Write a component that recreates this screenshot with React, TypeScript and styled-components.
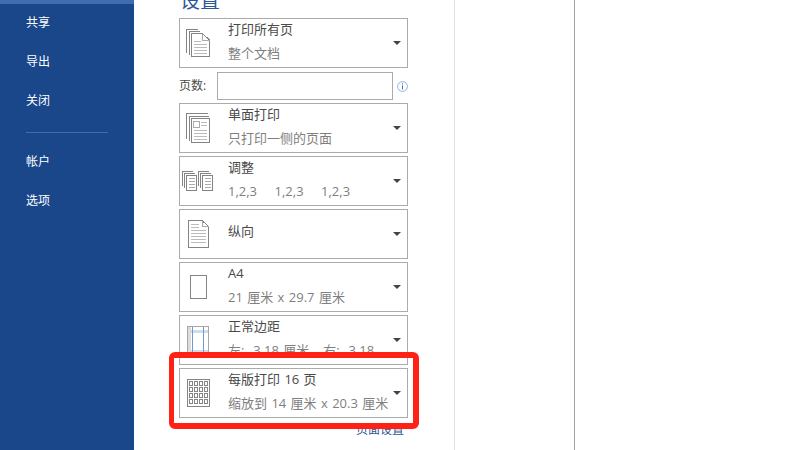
import React from 'react';
import styled, { createGlobalStyle } from 'styled-components';

const GlobalStyle = createGlobalStyle`
  html, body {
    margin: 0;
    width: 800px;
    height: 450px;
    overflow: hidden;
    background: #fff;
    font-family: 'Open Sans', 'Noto Sans CJK SC', sans-serif;
  }
`;

const line = '#848484';

const StackedPagesIcon = () => (
  <svg width="24" height="28" viewBox="0 0 24 28" fill="none" stroke={line} strokeWidth="1" shapeRendering="crispEdges">
    <path d="M.5 24V.5H12M3.500 26V2.500H14" />
    <path d="M5.500 27.500V4.500H16.500L23.500 11V27.500Z" fill="#fff" />
    <path d="M16.500 4.500V11H23.500" stroke="#aaa" />
    <path d="M8 12.500H15M8 15.500H21M8 18.500H21M8 21.500H21M8 24.500H21" stroke="#bbb" />
  </svg>
);

const OneSidedIcon = () => (
  <svg width="24" height="30" viewBox="0 0 24 30" fill="none" stroke={line} strokeWidth="1" shapeRendering="crispEdges">
    <path d="M.5 26V.5H22M3.500 28V3.500H23" />
    <path d="M5.500 29.500V5.500H23.500V29.500Z" fill="#fff" />
    <path d="M7.500 8.500H13.500V14.500H7.500Z" stroke="#aaa" />
    <path d="M15 9.500H21M15 12.500H21M8 17.500H21M8 20.500H21M8 23.500H21M8 26.500H21" stroke="#bbb" />
  </svg>
);

const CollatedSet = () => (
  <g>
    <path d="M.5 15V.5H11M2.500 17V2.500H13" />
    <path d="M4.500 19.500V4.500H14.500V19.500Z" fill="#fff" />
    <path d="M6.500 7.500H12.500M6.500 10.500H12.500M6.500 13.500H12.500M6.500 16.500H12.500" stroke="#aaa" />
  </g>
);

const CollatedIcon = () => (
  <svg width="32" height="21" viewBox="0 0 32 21" fill="none" stroke={line} strokeWidth="1" shapeRendering="crispEdges">
    <CollatedSet />
    <g transform="translate(16 0)">
      <CollatedSet />
    </g>
  </svg>
);

const PortraitIcon = () => (
  <svg width="21" height="28" viewBox="0 0 21 28" fill="none" stroke={line} strokeWidth="1" shapeRendering="crispEdges">
    <path d="M.5 27.500V.5H14L20.500 6.500V27.500Z" />
    <path d="M14 .5V6.500H20.500" stroke="#aaa" />
    <path d="M3 4.500H11M3 7.500H11M3 10.500H18M3 13.500H18M3 16.500H18M3 19.500H18M3 22.500H18" stroke="#bbb" />
  </svg>
);

const PaperIcon = () => (
  <svg width="17" height="24" viewBox="0 0 17 24" fill="none" stroke={line} strokeWidth="1" shapeRendering="crispEdges">
    <path d="M.5 .5H16.500V23.500H.5Z" />
  </svg>
);

const MarginsIcon = () => (
  <svg width="22" height="29" viewBox="0 0 22 29" fill="none" shapeRendering="crispEdges">
    <path d="M.5 .5H21.500V28.500H.5Z" stroke="#a8a8a8" />
    <path d="M1 5H21M1 25H21" stroke="#cfdcec" strokeWidth="3" />
    <path d="M5.500 1V28M16.500 1V28" stroke="#6f9bcc" />
    <path d="M2 1V28" stroke="#dcdcdc" strokeWidth="3" />
  </svg>
);

const PagesPerSheetIcon = () => (
  <svg width="23" height="28" viewBox="0 0 23 28" fill="none" stroke={line} strokeWidth="1" shapeRendering="crispEdges">
    <path d="M.5 .5H22.500V27.500H.5Z" />
    {[2, 8, 14, 20].map((y) =>
      [2, 7, 12, 17].map((x) => <rect key={`${x}-${y}`} x={x + 0.5} y={y + 0.5} width="3" height="4" />),
    )}
  </svg>
);

const InfoIcon = () => (
  <svg width="11" height="11" viewBox="0 0 11 11" fill="none">
    <circle cx="5.500" cy="5.500" r="4.900" stroke="#8fb2e0" />
    <path d="M5.500 2.300V3.500M5.500 4.500V8.500" stroke="#3f72b8" />
  </svg>
);

const CollationDetail = () => (
  <Columns $gap={17.5}>
    <span>1,2,3</span>
    <span>1,2,3</span>
    <span>1,2,3</span>
  </Columns>
);

const MarginsDetail = () => (
  <Columns $gap={14}>
    <span>左:  3.18 厘米</span>
    <span>右:  3.18</span>
  </Columns>
);

type Option = {
  title: string;
  detail?: React.ReactNode;
  icon: React.ReactNode;
};

const beforePages: Option[] = [
  { title: '打印所有页', detail: '整个文档', icon: <StackedPagesIcon /> },
];

const afterPages: Option[] = [
  { title: '单面打印', detail: '只打印一侧的页面', icon: <OneSidedIcon /> },
  { title: '调整', detail: <CollationDetail />, icon: <CollatedIcon /> },
  { title: '纵向', icon: <PortraitIcon /> },
  { title: 'A4', detail: '21 厘米 x 29.7 厘米', icon: <PaperIcon /> },
  { title: '正常边距', detail: <MarginsDetail />, icon: <MarginsIcon /> },
  { title: '每版打印 16 页', detail: '缩放到 14 厘米 x 20.3 厘米', icon: <PagesPerSheetIcon /> },
];

const OptionRow = ({ option }: { option: Option }) => (
  <Dropdown>
    <IconSlot>{option.icon}</IconSlot>
    <Labels>
      <Title>{option.title}</Title>
      {option.detail && <Detail>{option.detail}</Detail>}
    </Labels>
    <Caret />
  </Dropdown>
);

export default function App() {
  return (
    <>
      <GlobalStyle />
      <Page>
        <Sidebar>
          <TopTab />
          <NavList>
            <NavItem>共享</NavItem>
            <NavItem>导出</NavItem>
            <NavItem>关闭</NavItem>
            <NavDivider />
            <NavItem>帐户</NavItem>
            <NavItem>选项</NavItem>
          </NavList>
        </Sidebar>
        <Settings>
          <Heading>设置</Heading>
          {beforePages.map((option) => (
            <OptionRow key={option.title} option={option} />
          ))}
          <PagesRow>
            <PagesLabel>页数:</PagesLabel>
            <PagesInput />
            <InfoIcon />
          </PagesRow>
          <OptionStack>
            {afterPages.map((option) => (
              <OptionRow key={option.title} option={option} />
            ))}
          </OptionStack>
          <SetupLink>页面设置</SetupLink>
          <Highlight />
        </Settings>
        <Copies />
        <Preview />
      </Page>
    </>
  );
}

const Page = styled.div`
  display: flex;
  width: 800px;
  height: 450px;
  overflow: hidden;
  background: #fff;
`;

const Sidebar = styled.nav`
  flex: 0 0 134px;
  background: #19478a;
  display: flex;
  flex-direction: column;
`;

const TopTab = styled.div`
  height: 4px;
  background: #3e6db0;
`;

const NavList = styled.div`
  display: flex;
  flex-direction: column;
  padding: 9px 26px 0;
`;

const NavItem = styled.div`
  height: 39px;
  line-height: 20px;
  font-size: 12px;
  color: #fff;
`;

const NavDivider = styled.div`
  height: 1px;
  margin: 2px 0 19px;
  background: #3e6db0;
`;

const Settings = styled.section`
  position: relative;
  flex: 0 0 321px;
  box-sizing: border-box;
  height: 450px;
  padding: 18px 0 0 45px;
  border-right: 1px solid #e1e1e1;
`;

const Heading = styled.h2`
  position: absolute;
  top: -13px;
  left: 46px;
  margin: 0;
  font-size: 20px;
  line-height: 28px;
  font-weight: 400;
  color: #2b579a;
`;

const Dropdown = styled.div`
  display: flex;
  align-items: center;
  box-sizing: border-box;
  width: 229px;
  height: 50px;
  flex: none;
  overflow: hidden;
  border: 1px solid #ababab;
  background: #fff;
`;

const IconSlot = styled.div`
  flex: 0 0 48px;
  display: flex;
  justify-content: center;
  align-items: center;
  padding-right: 12px;
  box-sizing: border-box;
`;

const Labels = styled.div`
  flex: 1;
  min-width: 0;
  display: flex;
  flex-direction: column;
  gap: 4px;
  padding-bottom: 4px;
`;

const Title = styled.div`
  font-size: 13px;
  line-height: 20px;
  color: #4a4a4a;
  white-space: pre;
  word-spacing: 1px;

  &:only-child {
    margin-bottom: 3px;
  }
`;

const Detail = styled.div`
  font-size: 13px;
  line-height: 20px;
  color: #7f7f7f;
  white-space: pre;
  word-spacing: 1px;
`;

const Columns = styled.span<{ $gap: number }>`
  display: flex;
  gap: ${({ $gap }) => $gap}px;
`;

const Caret = styled.span`
  flex: none;
  width: 0;
  height: 0;
  margin: 0 6px 0 4px;
  border-left: 4px solid transparent;
  border-right: 4px solid transparent;
  border-top: 4px solid #444;
`;

const PagesRow = styled.div`
  display: flex;
  align-items: center;
  width: 229px;
  height: 28px;
  margin: 4px 0 3px;
`;

const PagesLabel = styled.label`
  flex: 0 0 38px;
  padding-bottom: 2px;
  font-size: 12px;
  color: #4a4a4a;
`;

const PagesInput = styled.div`
  flex: 0 0 176px;
  box-sizing: border-box;
  height: 28px;
  margin-right: 4px;
  border: 1px solid #ababab;
`;

const OptionStack = styled.div`
  display: flex;
  flex-direction: column;
  gap: 3px;
`;

const SetupLink = styled.a`
  display: block;
  width: 229px;
  margin-top: 3px;
  padding-right: 4px;
  box-sizing: border-box;
  text-align: right;
  font-size: 12px;
  line-height: 18px;
  color: #2b579a;
`;

const Highlight = styled.div`
  position: absolute;
  left: 35px;
  top: 352px;
  width: 250px;
  height: 77px;
  box-sizing: border-box;
  border: 6px solid #ff2114;
  border-left-width: 5px;
  border-radius: 6px;
`;

const Copies = styled.div`
  flex: 0 0 120px;
  box-sizing: border-box;
  border-right: 1px solid #a0a0a0;
`;

const Preview = styled.div`
  flex: 1;
`;
